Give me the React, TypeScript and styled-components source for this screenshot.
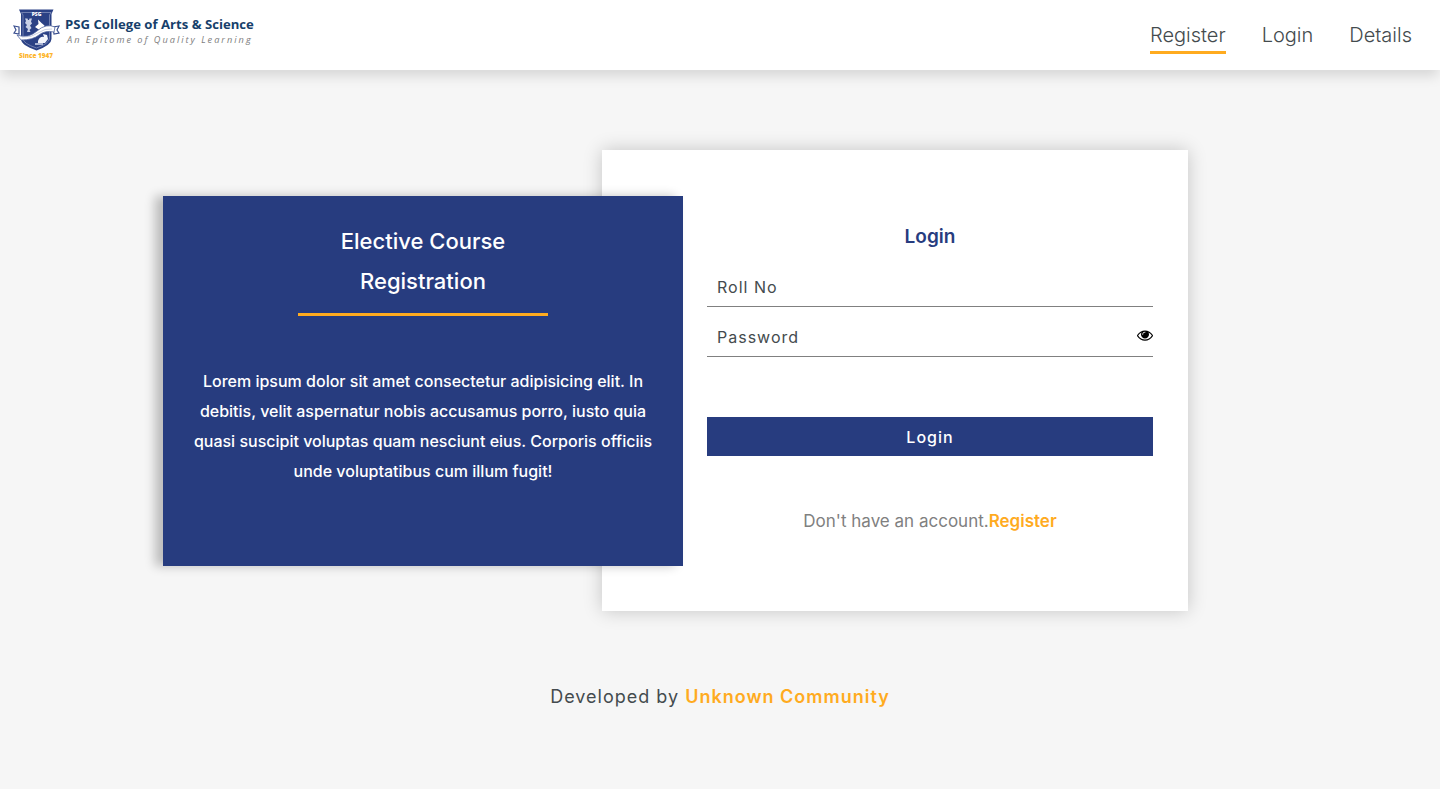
import React, { useState } from "react";
import styled, { createGlobalStyle } from "styled-components";

const navy = "#273c7f";
const amber = "#ffab1f";
const ink = "#444b4e";

const GlobalStyle = createGlobalStyle`
  *, *::before, *::after { box-sizing: border-box; }
  body {
    margin: 0;
    background: #f6f6f6;
    color: ${ink};
    font-family: Inter, "Liberation Sans", sans-serif;
  }
`;

const Header = styled.header`
  display: flex;
  align-items: center;
  justify-content: space-between;
  height: 70px;
  padding: 0 28px 0 13px;
  background: #fff;
  box-shadow: 0 8px 12px -2px rgba(0, 0, 0, 0.13);
`;

const LogoLink = styled.a`
  display: flex;
  svg { display: block; }
`;

const Nav = styled.nav`
  display: flex;
  gap: 36px;
  padding-top: 4px;
`;

const NavLink = styled.a<{ $active?: boolean }>`
  padding-bottom: 1px;
  border-bottom: 3px solid ${(p) => (p.$active ? amber : "transparent")};
  color: ${ink};
  font-size: 20px;
  font-weight: 300;
  line-height: 30px;
  text-decoration: none;
`;

const Main = styled.main`
  display: flex;
  align-items: center;
  justify-content: center;
  padding: 80px 89px 70px 0;
  @media (max-width: 1100px) {
    flex-direction: column;
    padding: 40px 20px;
  }
`;

const Intro = styled.section`
  z-index: 1;
  display: flex;
  flex-direction: column;
  align-items: center;
  flex: 0 1 520px;
  min-height: 370px;
  margin-right: -81px;
  padding: 25px 20px;
  background: ${navy};
  box-shadow: -8px 0 10px rgba(0, 0, 0, 0.24);
  color: #fff;
  text-align: center;
  @media (max-width: 1100px) {
    margin-right: 0;
    flex-basis: auto;
  }
`;

const IntroTitle = styled.h1`
  width: 250px;
  margin: 0 0 50px;
  padding-bottom: 12px;
  border-bottom: 3px solid ${amber};
  font-size: 22px;
  font-weight: 500;
  line-height: 40px;
`;

const IntroText = styled.p`
  margin: 0;
  font-size: 16px;
  font-weight: 500;
  line-height: 30px;
`;

const Card = styled.section`
  flex: 0 1 586px;
  min-height: 461px;
  padding: 72px 35px 62px 105px;
  background: #fff;
  box-shadow: 0 0 18px rgba(0, 0, 0, 0.2);
  @media (max-width: 1100px) {
    flex-basis: auto;
    padding: 40px 35px;
  }
`;

const Form = styled.form`
  display: flex;
  flex-direction: column;
  gap: 10px;
`;

const CardTitle = styled.h2`
  margin: 0 0 5px;
  color: ${navy};
  font-size: 19px;
  font-weight: 600;
  line-height: 30px;
  text-align: center;
`;

const Field = styled.label`
  display: flex;
  align-items: center;
  height: 40px;
  border-bottom: 1px solid #808080;
`;

const Input = styled.input`
  flex: 1;
  min-width: 0;
  padding: 0 10px;
  border: 0;
  outline: 0;
  background: transparent;
  color: ${ink};
  font: 400 16px/30px Inter, "Liberation Sans", sans-serif;
  letter-spacing: 1px;
  &::placeholder { color: ${ink}; opacity: 1; }
`;

const EyeButton = styled.button`
  display: flex;
  padding: 0 0 4px;
  border: 0;
  background: none;
  color: #000;
  cursor: pointer;
`;

const Submit = styled.button`
  height: 39px;
  margin-top: 50px;
  border: 0;
  background: ${navy};
  color: #fff;
  font: 500 16px/20px Inter, "Liberation Sans", sans-serif;
  letter-spacing: 1px;
  cursor: pointer;
`;

const Hint = styled.p`
  margin: 50px 0 0;
  color: #808080;
  font-size: 17px;
  line-height: 30px;
  text-align: center;
`;

const AccentLink = styled.a`
  color: ${amber};
  font-weight: 600;
  text-decoration: none;
`;

const Footer = styled.footer`
  padding: 1px 20px 77px;
  font-size: 18px;
  line-height: 30px;
  letter-spacing: 1px;
  text-align: center;
`;

function Logo() {
  return (
    <svg width="244" height="54" viewBox="0 0 244 54" role="img" aria-label="PSG College of Arts & Science">
      <path d="M6 1.500H40.500L38.500 6V31Q38.500 37 23.500 42.500Q8 37 8 31V6Z" fill="#2b4185" />
      <path d="M8.500 4.500H38L36.500 7V30.500Q36 35.500 23.500 40Q10 35.500 10 30.500V7Z" fill="none" stroke="#8e9bc3" strokeWidth=".7" />
      <text x="23.500" y="8" textAnchor="middle" fontFamily="Open Sans" fontWeight="800" fontSize="5" fill="#fff">PSG</text>
      <path d="M12 10.500h2.500l.5 1.500h1l.5-1.500H19l-1 3 1 2-2 2 1.500 2.500-2 2 1 2H14l1-3-2.500-2 1.500-2-2-2 1-2z" fill="#c9d0e5" />
      <path d="M22 19l3.500-3-.5-4.500 3.500 3.500 3 2.500-1 3.500-4 1z" fill="#fff" />
      <path d="M25 33q2-5 6-4l-1-3 4 1 1 4-3 4h-7z" fill="#f3f5fb" />
      <path d="M22 35h8v2h-8z" fill="#aab4d3" />
      <path d="M1 18l5 1v7l-5-1 2-3z M46 18l-6 1 1 7 5-1-2-3z" fill="#fff" stroke="#3b5090" strokeWidth="1.200" />
      <path d="M4 27Q15 31 24 23T42 19L41 24Q32 22 26 27T8 32Z" fill="#fff" stroke="#5266a0" strokeWidth=".8" />
      <path d="M9 29Q18 30 25 25T39 21" fill="none" stroke="#a7b2d1" strokeWidth=".6" />
      <text x="6" y="50" fontFamily="Open Sans" fontWeight="800" fontSize="6.400" fill="#fdb52b">Since 1947</text>
      <text x="52" y="21" fontFamily="Open Sans" fontWeight="700" fontSize="13.150" fill="#173f6b">PSG College of Arts &amp; Science</text>
      <text x="54" y="35" fontFamily="Open Sans" fontStyle="italic" fontSize="9.200" letterSpacing="2" fill="#7d7d7d">An Epitome of Quality Learning</text>
    </svg>
  );
}

function EyeIcon() {
  return (
    <svg width="16" height="16" viewBox="0 0 1792 1792" fill="currentColor" aria-hidden="true">
      <path d="M1664 960q-152-236-381-353 61 104 61 225 0 185-131.500 316.500t-316.500 131.500-316.500-131.500-131.500-316.500q0-121 61-225-229 117-381 353 133 205 333.500 326.500t434.500 121.500 434.500-121.500 333.500-326.500zm-720-384q0-20-14-34t-34-14q-125 0-214.500 89.500t-89.500 214.500q0 20 14 34t34 14 34-14 14-34q0-86 61-147t147-61q20 0 34-14t14-34zm848 384q0 34-20 69-140 230-376.500 368.500t-499.500 138.500-499.500-139-376.500-368q-20-35-20-69t20-69q140-229 376.500-368t499.500-139 499.500 139 376.500 368q20 35 20 69z" />
    </svg>
  );
}

export default function App() {
  const [visible, setVisible] = useState(false);
  return (
    <>
      <GlobalStyle />
      <Header>
        <LogoLink href="#home"><Logo /></LogoLink>
        <Nav>
          <NavLink href="#register" $active>Register</NavLink>
          <NavLink href="#login">Login</NavLink>
          <NavLink href="#details">Details</NavLink>
        </Nav>
      </Header>
      <Main>
        <Intro>
          <IntroTitle>Elective Course Registration</IntroTitle>
          <IntroText>
            Lorem ipsum dolor sit amet consectetur adipisicing elit. In debitis, velit aspernatur nobis
            accusamus porro, iusto quia quasi suscipit voluptas quam nesciunt eius. Corporis officiis
            unde voluptatibus cum illum fugit!
          </IntroText>
        </Intro>
        <Card>
          <Form onSubmit={(e) => e.preventDefault()}>
            <CardTitle>Login</CardTitle>
            <Field>
              <Input type="text" placeholder="Roll No" aria-label="Roll No" />
            </Field>
            <Field>
              <Input type={visible ? "text" : "password"} placeholder="Password" aria-label="Password" />
              <EyeButton type="button" aria-label="Show password" onClick={() => setVisible(!visible)}>
                <EyeIcon />
              </EyeButton>
            </Field>
            <Submit type="submit">Login</Submit>
          </Form>
          <Hint>
            Don't have an account.<AccentLink href="#register">Register</AccentLink>
          </Hint>
        </Card>
      </Main>
      <Footer>
        Developed by <AccentLink href="#community">Unknown Community</AccentLink>
      </Footer>
    </>
  );
}
